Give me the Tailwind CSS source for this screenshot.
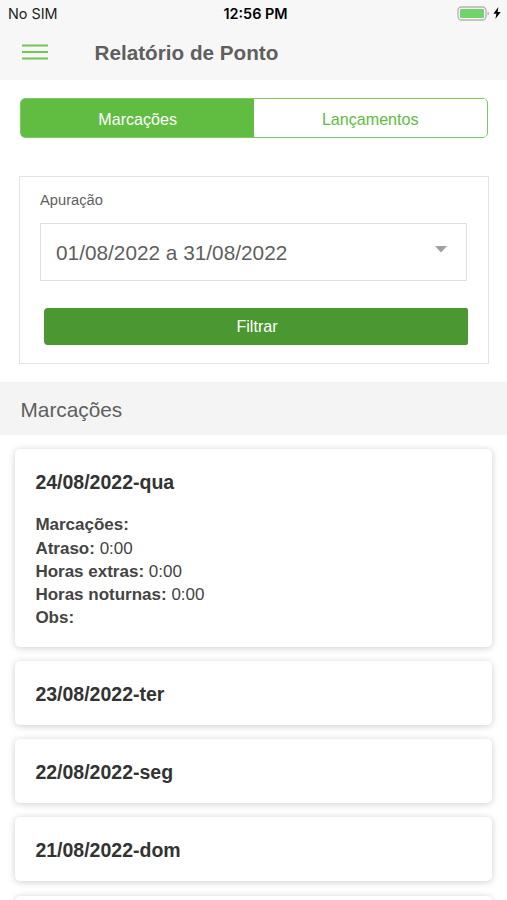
<!DOCTYPE html>
<html lang="pt-BR">
<head>
	<meta charset="UTF-8">
	<meta name="viewport" content="width=device-width, initial-scale=1.0">
	<title>Relatório de Ponto</title>
	<script src="https://cdn.jsdelivr.net/npm/@tailwindcss/browser@4"></script>
</head>
<body class="bg-white font-['Liberation_Sans',Arial,sans-serif] text-[#5f5f5f]">
	<div class="h-[900px] overflow-hidden">
		<!-- Header -->
		<header class="h-20 bg-[#f7f7f7]">
			<!-- Status bar -->
			<div class="grid h-7 grid-cols-3 items-center pl-2 pr-1.5 font-['Inter',sans-serif] text-[14.4px] text-[#222]">
				<span>No SIM</span>
				<span class="pl-0.5 text-center font-semibold text-black whitespace-nowrap">12:56 PM</span>
				<div class="flex items-center justify-end gap-[3px] pb-0.5">
					<svg width="33" height="15" viewBox="0 0 33 15">
						<rect x="1" y="1" width="28" height="13" rx="3.5" fill="#f7f7f7" stroke="#b4b4b4" stroke-width="1.3"/>
						<rect x="3" y="3" width="24" height="9" rx="1" fill="#6fd56b"/>
						<path d="M30.6 5.5c1.8.6 1.8 3.4 0 4z" fill="#a9a9a9"/>
					</svg>
					<svg width="8" height="12" viewBox="0 0 8 12">
						<path d="M5.4 0L.4 6.8h3L2.4 12 7.7 4.9H4.6z" fill="#000"/>
					</svg>
				</div>
			</div>
			<div class="flex h-12 items-center pl-[22px]">
				<button aria-label="Menu">
					<svg width="26" height="16" viewBox="0 0 26 16">
						<path d="M0 1.4h26M0 8h26M0 14.4h26" stroke="#74c657" stroke-width="2"/>
					</svg>
				</button>
				<h1 class="ml-[46.5px] pt-0.5 text-[20.7px] font-bold leading-none">Relatório de Ponto</h1>
			</div>
		</header>

		<!-- Tabs -->
		<div class="ml-[20.4px] mr-[19.5px] mt-[18px] flex h-10 overflow-hidden rounded-[5px] border-[1.5px] border-[#7ccb62] text-[16.1px]">
			<button class="w-1/2 bg-[#61bc42] pt-0.5 text-white">Marcações</button>
			<button class="w-1/2 bg-white pt-0.5 text-[#61bc42]">Lançamentos</button>
		</div>

		<!-- Filter -->
		<form class="ml-[19px] mr-[18px] mt-[38px] h-[188px] border border-[#e3e3e3] px-5 pt-[13px]">
			<label class="block h-[18px] text-[14.7px] leading-[20px]">Apuração</label>
			<div class="mr-px mt-[15px] flex h-[58px] items-center justify-between border border-[#dfdfdf] pl-[15px] pr-[19px]">
				<span class="pt-[3px] text-[20.8px] leading-none">01/08/2022 a 31/08/2022</span>
				<svg class="mb-[5px]" width="12" height="7" viewBox="0 0 12 7">
					<path d="M0 0h12L6 6.5z" fill="#a0a0a0"/>
				</svg>
			</div>
			<button type="button" class="ml-1 mt-[27px] block h-[37px] w-[424px] rounded-l-[4px] rounded-r-[2px] bg-[#4b9732] pl-0.5 text-[16.1px] text-white">Filtrar</button>
		</form>

		<h2 class="mt-[18px] flex h-[53px] items-center bg-[#f4f4f4] pl-[20.5px] pt-1 text-[20.8px] leading-none">Marcações</h2>

		<!-- Daily records -->
		<div class="flex flex-col gap-[14.3px] px-[15.4px] pt-[14px] text-[#333]">
			<article class="h-[197.5px] shrink-0 rounded-[5px] bg-white px-5 pt-5 shadow-[0_1px_7px_rgba(0,0,0,0.2)]">
				<h3 class="text-[19.5px] font-bold leading-[26px]">24/08/2022-qua</h3>
				<div class="mt-[18.3px] text-[17px] leading-[23.2px] text-[#444]">
					<p><b>Marcações:</b></p>
					<p><b>Atraso:</b> 0:00</p>
					<p><b>Horas extras:</b> 0:00</p>
					<p><b>Horas noturnas:</b> 0:00</p>
					<p><b>Obs:</b></p>
				</div>
			</article>
			<article class="h-16 shrink-0 rounded-[5px] bg-white px-5 pt-5 shadow-[0_1px_7px_rgba(0,0,0,0.2)]">
				<h3 class="text-[19.5px] font-bold leading-[26px]">23/08/2022-ter</h3>
			</article>
			<article class="h-16 shrink-0 rounded-[5px] bg-white px-5 pt-5 shadow-[0_1px_7px_rgba(0,0,0,0.2)]">
				<h3 class="text-[19.5px] font-bold leading-[26px]">22/08/2022-seg</h3>
			</article>
			<article class="h-16 shrink-0 rounded-[5px] bg-white px-5 pt-5 shadow-[0_1px_7px_rgba(0,0,0,0.2)]">
				<h3 class="text-[19.5px] font-bold leading-[26px]">21/08/2022-dom</h3>
			</article>
			<article class="h-16 shrink-0 rounded-[5px] bg-white shadow-[0_1px_7px_rgba(0,0,0,0.2)]"></article>
		</div>
	</div>
</body>
</html>
